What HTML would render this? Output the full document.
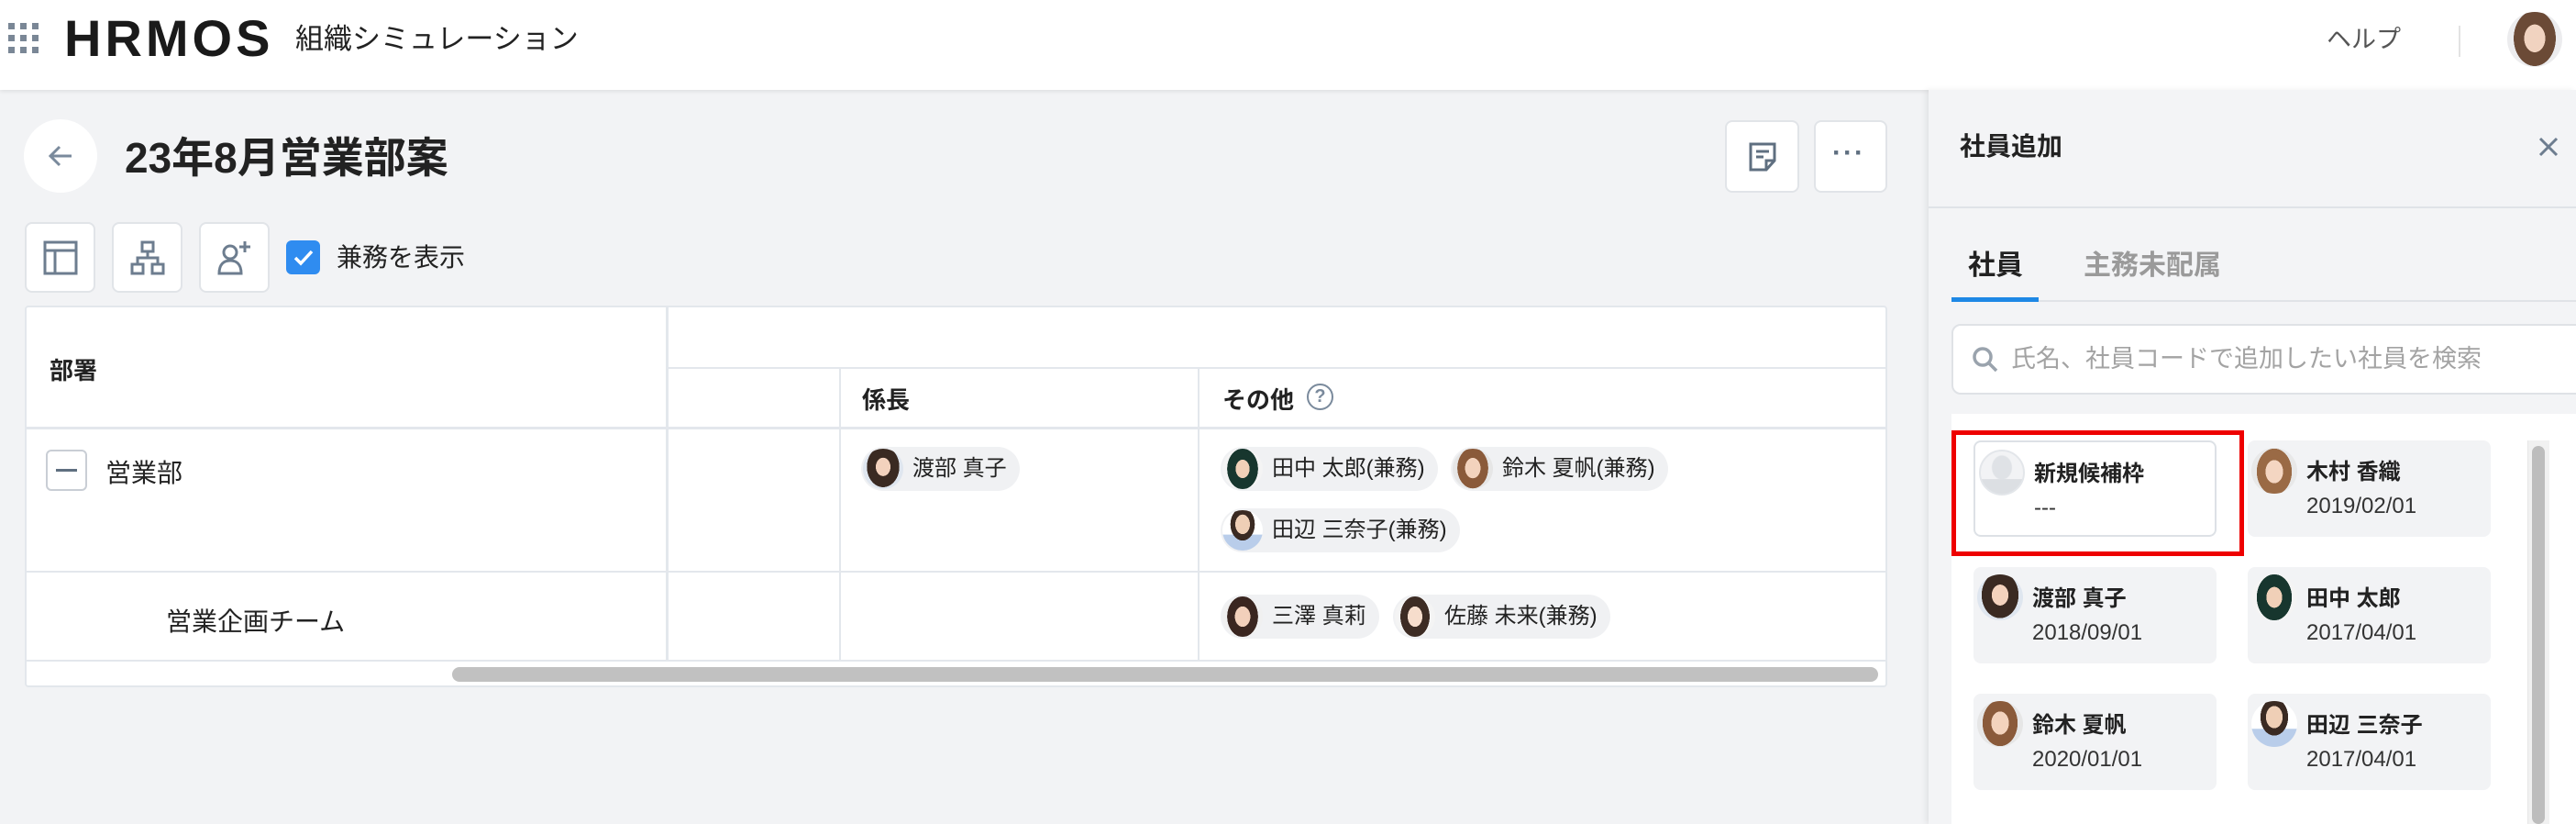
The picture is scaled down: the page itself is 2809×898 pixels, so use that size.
<!DOCTYPE html>
<html><head><meta charset="utf-8"><style>
*{box-sizing:border-box;margin:0;padding:0}
body{width:2809px;height:898px;overflow:hidden;background:#f2f3f5;font-family:"Liberation Sans","Noto Sans CJK JP",sans-serif;color:#222;position:relative}
.a{position:absolute}
.hdr{left:0;top:0;width:2809px;height:98px;background:#fff;box-shadow:0 2px 4px rgba(0,0,0,.08)}
.btn{background:#fff;border:2px solid #e1e4e8;border-radius:8px}
.chip{position:absolute;height:48px;background:#f0f1f3;border-radius:24px;font-size:24px;line-height:48px;padding-left:56px;padding-right:14px;white-space:nowrap}
.av{position:absolute;border-radius:50%;background:radial-gradient(ellipse 40% 50% at 50% 45%,#f3d2bd 0 45%,#3a2a22 46% 100%,transparent 101%),#dfe6ef}
.chip .av{left:2px;top:2px;width:44px;height:44px}
.card{position:absolute;width:265px;height:105px;background:#f2f3f5;border-radius:8px}
.card .av{left:4px;top:8px;width:50px;height:50px}
.card .n{position:absolute;left:64px;top:14px;font-size:24px;font-weight:bold}
.card .d{position:absolute;left:64px;top:58px;font-size:24px;color:#333}
.line{background:#e3e7ec}
</style></head><body>
<div class="a hdr"></div>
<svg class="a" style="left:9px;top:25px" width="34" height="34" viewBox="0 0 34 34" fill="#7a8796"><rect x="0" y="0" width="7" height="7"/><rect x="13" y="0" width="7" height="7"/><rect x="26" y="0" width="7" height="7"/><rect x="0" y="13" width="7" height="7"/><rect x="13" y="13" width="7" height="7"/><rect x="26" y="13" width="7" height="7"/><rect x="0" y="26" width="7" height="7"/><rect x="13" y="26" width="7" height="7"/><rect x="26" y="26" width="7" height="7"/></svg>
<div class="a" style="left:70px;top:12px;font-size:56px;font-weight:bold;letter-spacing:4px;color:#1a1a1a;line-height:60px">HRMOS</div>
<div class="a" style="left:322px;top:24px;font-size:31px;line-height:38px;color:#222">組織シミュレーション</div>
<div class="a" style="left:2537px;top:27px;font-size:27px;color:#555;line-height:32px">ヘルプ</div>
<div class="a" style="left:2681px;top:28px;width:2px;height:34px;background:#e3e3e3"></div>
<div class="a av" style="left:2734px;top:13px;width:60px;height:60px;background:radial-gradient(ellipse 38% 50% at 50% 48%,#f1d3c0 0 50%,#6b4a36 51% 100%,transparent 101%),#ececee"></div>

<div class="a" style="left:26px;top:130px;width:80px;height:80px;border-radius:50%;background:#fff"></div>
<svg class="a" style="left:50px;top:154px" width="32" height="32" viewBox="0 0 32 32" fill="none" stroke="#7a8a9c" stroke-width="3"><path d="M28 16H5M15 6L5 16l10 10"/></svg>
<div class="a" style="left:136px;top:144px;font-size:46px;font-weight:bold;line-height:56px">23年8月営業部案</div>
<div class="a btn" style="left:1881px;top:131px;width:81px;height:79px"></div>
<svg class="a" style="left:1904px;top:153px" width="36" height="36" viewBox="0 0 36 36" fill="none" stroke="#5f6f80" stroke-width="3"><path d="M5 4h26v18l-9 10H5z M22 32V22h9 M11 12h14 M11 18h8"/></svg>
<div class="a btn" style="left:1978px;top:131px;width:80px;height:79px"></div>
<div class="a" style="left:1998px;top:150px;font-size:30px;color:#5f6f80;letter-spacing:2px;font-weight:bold">···</div>

<div class="a btn" style="left:27px;top:242px;width:77px;height:77px"></div>
<svg class="a" style="left:46px;top:261px" width="40" height="40" viewBox="0 0 40 40" fill="none" stroke="#6d7d8f" stroke-width="3"><rect x="3" y="3" width="34" height="34"/><path d="M3 12h34M14 12v25"/></svg>
<div class="a btn" style="left:122px;top:242px;width:77px;height:77px"></div>
<svg class="a" style="left:141px;top:261px" width="40" height="40" viewBox="0 0 40 40" fill="none" stroke="#6d7d8f" stroke-width="3"><rect x="14" y="3" width="12" height="10"/><rect x="3" y="27" width="12" height="10"/><rect x="25" y="27" width="12" height="10"/><path d="M20 13v7M9 27v-7h22v7"/></svg>
<div class="a btn" style="left:217px;top:242px;width:77px;height:77px"></div>
<svg class="a" style="left:236px;top:261px" width="40" height="40" viewBox="0 0 40 40" fill="none" stroke="#6d7d8f" stroke-width="3"><circle cx="15" cy="14" r="7"/><path d="M3 37c0-10 5-14 12-14s12 4 12 14z M31 2v12M25 8h12"/></svg>
<div class="a" style="left:312px;top:262px;width:37px;height:37px;background:#2f8cf0;border-radius:6px"></div>
<svg class="a" style="left:318px;top:268px" width="26" height="26" viewBox="0 0 26 26" fill="none" stroke="#fff" stroke-width="3.5"><path d="M4 13l6 6 12-13"/></svg>
<div class="a" style="left:367px;top:264px;font-size:28px;line-height:34px">兼務を表示</div>

<div class="a" style="left:27px;top:333px;width:2031px;height:416px;background:#fff;border:2px solid #e3e7ec;border-radius:4px"></div>
<div class="a line" style="left:727px;top:400px;width:1330px;height:2px"></div>
<div class="a line" style="left:27px;top:465px;width:2030px;height:3px"></div>
<div class="a line" style="left:27px;top:622px;width:2030px;height:2px"></div>
<div class="a line" style="left:27px;top:719px;width:2030px;height:2px"></div>
<div class="a line" style="left:726px;top:333px;width:3px;height:387px"></div>
<div class="a line" style="left:915px;top:400px;width:2px;height:320px"></div>
<div class="a line" style="left:1306px;top:400px;width:2px;height:320px"></div>
<div class="a" style="left:54px;top:384px;font-size:26px;font-weight:bold">部署</div>
<div class="a" style="left:940px;top:416px;font-size:26px;font-weight:bold">係長</div>
<div class="a" style="left:1333px;top:416px;font-size:26px;font-weight:bold">その他</div>
<div class="a" style="left:1425px;top:418px;width:29px;height:29px;border:2.5px solid #7a8a9c;border-radius:50%;color:#7a8a9c;font-size:20px;font-weight:bold;text-align:center;line-height:24px">?</div>
<div class="a" style="left:50px;top:490px;width:45px;height:45px;border:2px solid #c9ced5;border-radius:6px;background:#fff"></div>
<div class="a" style="left:61px;top:511px;width:23px;height:3px;background:#5f6f80"></div>
<div class="a" style="left:115px;top:494px;font-size:28px">営業部</div>
<div class="a" style="left:181px;top:656px;font-size:28px">営業企画チーム</div>

<div class="chip" style="left:939px;top:487px"><span class="av"></span>渡部 真子</div>
<div class="chip" style="left:1331px;top:487px"><span class="av" style="background:radial-gradient(ellipse 38% 50% at 50% 50%,#f0d0b8 0 45%,#17362e 46% 100%,transparent 101%),#f4f4f4"></span>田中 太郎(兼務)</div>
<div class="chip" style="left:1582px;top:487px"><span class="av" style="background:radial-gradient(ellipse 38% 50% at 50% 48%,#f3d3bd 0 50%,#8a5a3a 51% 100%,transparent 101%),#e6e6e6"></span>鈴木 夏帆(兼務)</div>
<div class="chip" style="left:1331px;top:554px"><span class="av" style="background:radial-gradient(ellipse 30% 40% at 50% 35%,#efcfb6 0 60%,#3a2a22 61% 100%,transparent 101%),linear-gradient(#fff 60%,#b9cdea 61%)"></span>田辺 三奈子(兼務)</div>
<div class="chip" style="left:1331px;top:648px"><span class="av" style="background:radial-gradient(ellipse 38% 50% at 50% 50%,#f2d0bb 0 50%,#3a2620 51% 100%,transparent 101%),#f0f0f0"></span>三澤 真莉</div>
<div class="chip" style="left:1519px;top:648px"><span class="av" style="background:radial-gradient(ellipse 36% 50% at 50% 50%,#f6ddcc 0 50%,#3d2c24 51% 100%,transparent 101%),#f4f4f4"></span>佐藤 未来(兼務)</div>
<div class="a" style="left:493px;top:727px;width:1555px;height:16px;background:#c1c1c1;border-radius:8px"></div>

<div class="a" style="left:2103px;top:98px;width:706px;height:800px;background:#f3f4f6;box-shadow:-3px 0 6px rgba(0,0,0,.07)"></div>
<div class="a" style="left:2137px;top:142px;font-size:28px;font-weight:bold;line-height:36px">社員追加</div>
<svg class="a" style="left:2767px;top:148px" width="24" height="24" viewBox="0 0 24 24" stroke="#6d7d8f" stroke-width="3"><path d="M3 3l18 18M21 3L3 21"/></svg>
<div class="a" style="left:2103px;top:225px;width:706px;height:2px;background:#dfe3e8"></div>
<div class="a" style="left:2146px;top:272px;font-size:30px;font-weight:bold;line-height:36px">社員</div>
<div class="a" style="left:2272px;top:272px;font-size:30px;font-weight:bold;line-height:36px;color:#9a9a9a">主務未配属</div>
<div class="a" style="left:2128px;top:327px;width:681px;height:2px;background:#e0e3e7"></div>
<div class="a" style="left:2128px;top:324px;width:95px;height:5px;background:#1e88e5"></div>
<div class="a" style="left:2128px;top:353px;width:700px;height:77px;background:#fff;border:2px solid #dfe2e6;border-radius:10px"></div>
<svg class="a" style="left:2150px;top:377px" width="30" height="30" viewBox="0 0 30 30" fill="none" stroke="#9aa3ad" stroke-width="3.5"><circle cx="12" cy="12" r="9"/><path d="M19 19l8 8"/></svg>
<div class="a" style="left:2193px;top:374px;font-size:27px;color:#a3a3a3;line-height:34px">氏名、社員コードで追加したい社員を検索</div>
<div class="a" style="left:2128px;top:451px;width:681px;height:447px;background:#fff"></div>

<div class="card" style="left:2152px;top:480px;background:#fff;border:2px solid #dde1e6"><span class="av" style="background:radial-gradient(ellipse 25% 30% at 50% 38%,#dfe2e6 0 90%,transparent 100%),linear-gradient(#f2f3f5 65%,#dcdfe3 66%);border:2px solid #e3e6ea"></span><div class="n">新規候補枠</div><div class="d">---</div></div>
<div class="card" style="left:2451px;top:480px"><span class="av" style="background:radial-gradient(ellipse 38% 50% at 50% 52%,#f4d6c2 0 50%,#9a6a45 51% 100%,transparent 101%),#e8e8e8"></span><div class="n">木村 香織</div><div class="d">2019/02/01</div></div>
<div class="card" style="left:2152px;top:618px"><span class="av"></span><div class="n">渡部 真子</div><div class="d">2018/09/01</div></div>
<div class="card" style="left:2451px;top:618px"><span class="av" style="background:radial-gradient(ellipse 38% 50% at 50% 50%,#f0d0b8 0 45%,#17362e 46% 100%,transparent 101%),#f4f4f4"></span><div class="n">田中 太郎</div><div class="d">2017/04/01</div></div>
<div class="card" style="left:2152px;top:756px"><span class="av" style="background:radial-gradient(ellipse 38% 50% at 50% 48%,#f3d3bd 0 50%,#8a5a3a 51% 100%,transparent 101%),#e6e6e6"></span><div class="n">鈴木 夏帆</div><div class="d">2020/01/01</div></div>
<div class="card" style="left:2451px;top:756px"><span class="av" style="background:radial-gradient(ellipse 30% 40% at 50% 35%,#efcfb6 0 60%,#3a2a22 61% 100%,transparent 101%),linear-gradient(#fff 60%,#b9cdea 61%)"></span><div class="n">田辺 三奈子</div><div class="d">2017/04/01</div></div>
<div class="a" style="left:2128px;top:469px;width:319px;height:137px;border:5px solid #ee0000"></div>
<div class="a" style="left:2756px;top:480px;width:24px;height:418px;background:#f1f1f1;border-left:1px solid #e6e6e6"></div>
<div class="a" style="left:2761px;top:486px;width:14px;height:412px;background:#bdbdbd;border-radius:7px"></div>
</body></html>
